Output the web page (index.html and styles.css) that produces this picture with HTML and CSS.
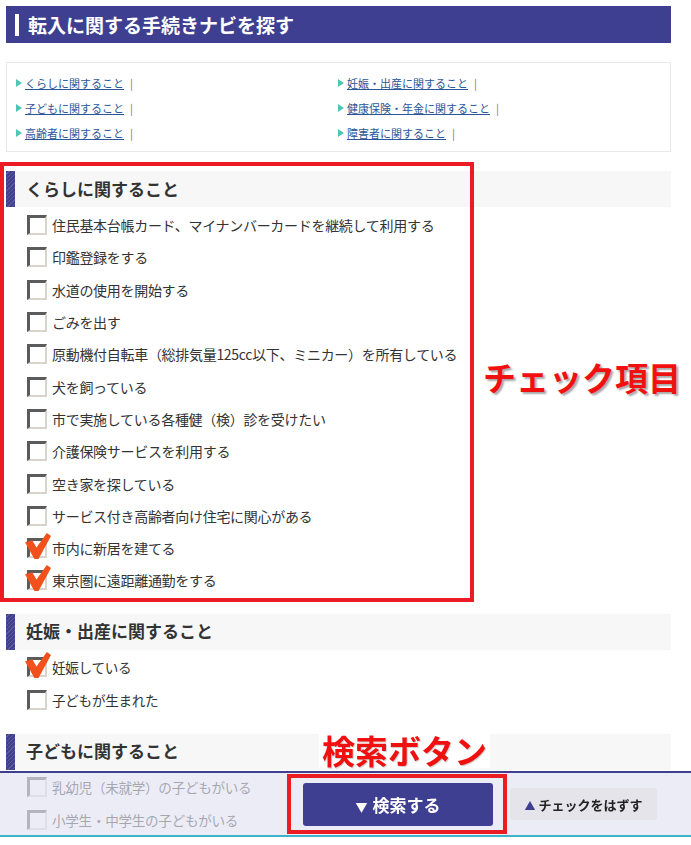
FILE: index.html
```html
<!DOCTYPE html>
<html lang="ja">
<head>
    <meta charset="UTF-8">
    <meta name="viewport" content="width=device-width, initial-scale=1.0">
    <title>転入に関する手続きナビを探す</title>
    <link rel="stylesheet" href="styles.css">
</head>
<body>
    <div class="page">
        <h1 class="nav-title">転入に関する手続きナビを探す</h1>

        <!-- カテゴリへのリンク -->
        <ul class="cat-links">
            <li><a href="#kurashi">くらしに関すること</a><span class="sep">|</span></li>
            <li><a href="#ninshin">妊娠・出産に関すること</a><span class="sep">|</span></li>
            <li><a href="#kodomo">子どもに関すること</a><span class="sep">|</span></li>
            <li><a href="#kenko">健康保険・年金に関すること</a><span class="sep">|</span></li>
            <li><a href="#koreisha">高齢者に関すること</a><span class="sep">|</span></li>
            <li><a href="#shogai">障害者に関すること</a><span class="sep">|</span></li>
        </ul>

        <section class="cat" id="kurashi">
            <h2 class="cat-head">くらしに関すること</h2>
            <ul class="checks">
                <li><span class="box"></span>住民基本台帳カード、マイナンバーカードを継続して利用する</li>
                <li><span class="box"></span>印鑑登録をする</li>
                <li><span class="box"></span>水道の使用を開始する</li>
                <li><span class="box"></span>ごみを出す</li>
                <li><span class="box"></span>原動機付自転車（総排気量125cc以下、ミニカー）を所有している</li>
                <li><span class="box"></span>犬を飼っている</li>
                <li><span class="box"></span>市で実施している各種健（検）診を受けたい</li>
                <li><span class="box"></span>介護保険サービスを利用する</li>
                <li><span class="box"></span>空き家を探している</li>
                <li><span class="box"></span>サービス付き高齢者向け住宅に関心がある</li>
                <li><span class="box"><svg class="tick" viewBox="0 0 25 25"><path d="M0 9 L7 7 L11 14 L21 0 L25 3 L13 25 L9 25 Z"/></svg></span>市内に新居を建てる</li>
                <li><span class="box"><svg class="tick" viewBox="0 0 25 25"><path d="M0 9 L7 7 L11 14 L21 0 L25 3 L13 25 L9 25 Z"/></svg></span>東京圏に遠距離通勤をする</li>
            </ul>
        </section>

        <section class="cat" id="ninshin">
            <h2 class="cat-head">妊娠・出産に関すること</h2>
            <ul class="checks checks-wide">
                <li><span class="box"><svg class="tick" viewBox="0 0 25 25"><path d="M0 9 L7 7 L11 14 L21 0 L25 3 L13 25 L9 25 Z"/></svg></span>妊娠している</li>
                <li><span class="box"></span>子どもが生まれた</li>
            </ul>
        </section>

        <section class="cat" id="kodomo">
            <h2 class="cat-head">子どもに関すること</h2>
            <ul class="checks checks-wide">
                <li><span class="box"></span>乳幼児（未就学）の子どもがいる</li>
                <li><span class="box"></span>小学生・中学生の子どもがいる</li>
            </ul>
        </section>
    </div>

    <!-- 画面下に固定の検索バー -->
    <div class="search-bar">
        <button type="button" class="btn-search"><span class="arrow">▼</span>検索する</button>
        <button type="button" class="btn-clear"><span class="arrow">▲</span>チェックをはずす</button>
    </div>

    <!-- 説明用の注記 -->
    <div class="frame frame-items"></div>
    <div class="note note-items">チェック項目</div>
    <div class="note note-search">検索ボタン</div>
    <div class="frame frame-search"></div>
</body>
</html>
```
FILE: styles.css
```css
body {
    margin: 0;
    font-family: "Noto Sans CJK JP", "Liberation Sans", sans-serif;
    color: #333;
    background: #fff;
}
.page {
    padding: 6px 20px 0 6px;
}
.nav-title {
    margin: 0;
    height: 37px;
    background: #3f3f91;
    color: #fff;
    font-size: 19px;
    font-weight: bold;
    display: flex;
    align-items: center;
    gap: 9px;
    padding-left: 9px;
}
.nav-title::before {
    content: "";
    width: 4px;
    height: 22px;
    background: #fff;
}
.cat-links {
    list-style: none;
    margin: 19px 0 0;
    padding: 7px 0 0 9px;
    height: 90px;
    box-sizing: border-box;
    border: 1px solid #e8e8e8;
    display: grid;
    grid-template-columns: 322px 1fr;
    grid-auto-rows: 25px;
    font-size: 11px;
}
.cat-links li {
    display: flex;
    align-items: center;
}
.cat-links li::before {
    content: "";
    border-left: 6px solid #4fc6b4;
    border-top: 4px solid transparent;
    border-bottom: 4px solid transparent;
    margin-right: 3px;
}
.cat-links a {
    color: #2b5597;
}
.sep {
    color: #777;
    margin-left: 6px;
}
.cat {
    margin-top: 17px;
}
#kurashi {
    margin-top: 19px;
}
.cat-head {
    margin: 0;
    height: 36px;
    padding-left: 20px;
    display: flex;
    align-items: center;
    font-size: 17px;
    font-weight: bold;
    color: #333;
    line-height: 1;
    padding-bottom: 2px;
    box-sizing: border-box;
    background: repeating-linear-gradient(135deg, #40408f 0 2px, #5a5aa3 2px 3px) left / 9px 100% no-repeat, #f7f7f7;
}
.checks {
    list-style: none;
    margin: 0;
    padding: 2px 0 0 21px;
}
.checks li {
    height: 32.3px;
    display: flex;
    align-items: center;
    font-size: 14px;
    letter-spacing: -0.3px;
}
.checks-wide {
    padding-top: 1px;
}
.checks-wide li {
    height: 33px;
    font-size: 13.6px;
}
.box {
    position: relative;
    flex: none;
    width: 20px;
    height: 20px;
    box-sizing: border-box;
    margin-right: 5px;
    background: #fff;
    border-top: 3px solid #5b5b5b;
    border-left: 3px solid #5b5b5b;
    border-right: 2px solid #d8d4cc;
    border-bottom: 2px solid #d8d4cc;
}
.tick {
    position: absolute;
    left: -5px;
    top: -8px;
    width: 26px;
    height: 26px;
    fill: #f2511d;
}
.search-bar {
    position: fixed;
    left: 0;
    right: 0;
    bottom: 8px;
    height: 62px;
    border-top: 2px solid #3f3f91;
    border-bottom: 2px solid #3bb4c8;
    background: rgba(226, 226, 241, 0.66);
    display: flex;
    align-items: center;
    gap: 17px;
    padding-left: 303px;
}
.search-bar button {
    font-family: inherit;
    font-weight: bold;
    border: none;
    border-radius: 3px;
    cursor: pointer;
}
.btn-search {
    width: 190px;
    height: 43px;
    background: #3f3f91;
    color: #fff;
    font-size: 17px;
}
.btn-search .arrow {
    font-size: 12px;
    margin-right: 5px;
}
.btn-clear {
    width: 147px;
    height: 32px;
    background: #e4e4ea;
    color: #222;
    font-size: 13px;
}
.btn-clear .arrow {
    color: #3f3f91;
    font-size: 11px;
    margin-right: 3px;
}
.frame {
    position: absolute;
    box-sizing: border-box;
    border: 4px solid #ec1c24;
    z-index: 5;
}
.frame-items {
    left: 0;
    top: 162px;
    width: 474px;
    height: 440px;
}
.frame-search {
    left: 287px;
    top: 774px;
    width: 220px;
    height: 60px;
}
.note {
    position: absolute;
    z-index: 5;
    font-weight: bold;
    color: #f01010;
    font-size: 33px;
    line-height: 35px;
}
.note-items {
    left: 483px;
    top: 360px;
    text-shadow: 2px 2px 2px rgba(0, 0, 0, 0.35);
}
.note-search {
    left: 319px;
    top: 733px;
    width: 171px;
    height: 35px;
    background: #fff;
    text-align: center;
    text-shadow: 1px 1px 1px rgba(0, 0, 0, 0.2);
}
```
